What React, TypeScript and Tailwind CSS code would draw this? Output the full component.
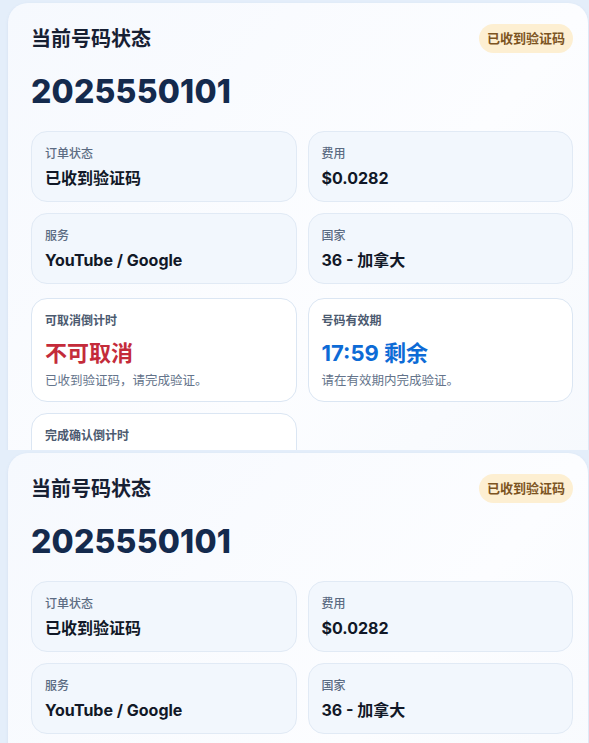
import React from "react";

type InfoTileProps = {
  label: string,
  value: string
}

function InfoTile({label, value}: InfoTileProps) {
  return (
      <div className="h-[71px] rounded-[16px] border border-[#e1eaf5] bg-[#f2f7fd] px-[13px] pt-[13px]">
        <div className="text-[12px] leading-[18px] font-medium text-[#5b6b82]">{label}</div>
        <div className="mt-[3px] text-[16px] leading-[24px] font-bold text-[#111827]">{value}</div>
      </div>
  )
}

type TimerTileProps = {
  label: string,
  value?: string,
  valueClass?: string,
  note?: string
}

function TimerTile({label, value, valueClass, note}: TimerTileProps) {
  return (
      <div className="h-[104px] rounded-[16px] border border-[#dbe6f3] bg-white px-[13px] pt-[13px]">
        <div className="text-[12px] leading-[18px] font-semibold text-[#4b5a70]">{label}</div>
        {value && (
            <div className={`mt-[8px] text-[22px] leading-[30px] font-bold ${valueClass}`}>{value}</div>
        )}
        {note && (
            <div className="mt-[3px] text-[12.5px] leading-[20px] text-[#64748b]">{note}</div>
        )}
      </div>
  )
}

type CardProps = {
  showTimers?: boolean
}

function NumberStatusCard({showTimers = true}: CardProps) {
  return (
      <div className="ml-[8px] mr-[1px] h-[700px] rounded-[20px] bg-gradient-to-br from-[#f6f9fe] via-[#fcfdff] to-[#f3f7fc] pl-[23px] pr-[15px] pt-[21px] shadow-[0_1px_3px_rgba(120,150,190,0.15)]">
        <div className="flex items-center justify-between">
          <h2 className="text-[20px] leading-[28px] font-bold text-[#172033]">当前号码状态</h2>
          <span className="rounded-full bg-[#fdefd2] px-[8px] text-[13px] leading-[29px] font-bold text-[#7c5422]">
            已收到验证码
          </span>
        </div>

        <div className="mt-[19px] text-[32px] leading-[40px] font-extrabold tracking-[0.2px] text-[#142a4d]">
          2025550101
        </div>

        <div className="mt-[19px] grid grid-cols-2 gap-x-[11px] gap-y-[11px]">
          <InfoTile label="订单状态" value="已收到验证码"/>
          <InfoTile label="费用" value="$0.0282"/>
          <InfoTile label="服务" value="YouTube / Google"/>
          <InfoTile label="国家" value="36 - 加拿大"/>
        </div>

        {showTimers && (
            <div className="mt-[14px] grid grid-cols-2 gap-x-[11px] gap-y-[11px]">
              <TimerTile label="可取消倒计时" value="不可取消" valueClass="text-[#c42b3a]" note="已收到验证码，请完成验证。"/>
              <TimerTile label="号码有效期" value="17:59 剩余" valueClass="text-[#0d6bd6]" note="请在有效期内完成验证。"/>
              <TimerTile label="完成确认倒计时"/>
            </div>
        )}
      </div>
  )
}

export default function App() {
  return (
      <div className="min-h-[743px] bg-[#e4eefa] font-['Inter','Noto_Sans_CJK_SC',sans-serif]">
        <div className="h-[450px] overflow-hidden pt-[3px]">
          <NumberStatusCard/>
        </div>
        <div className="h-[293px] overflow-hidden pt-[3px]">
          <NumberStatusCard showTimers={false}/>
        </div>
      </div>
  )
}
